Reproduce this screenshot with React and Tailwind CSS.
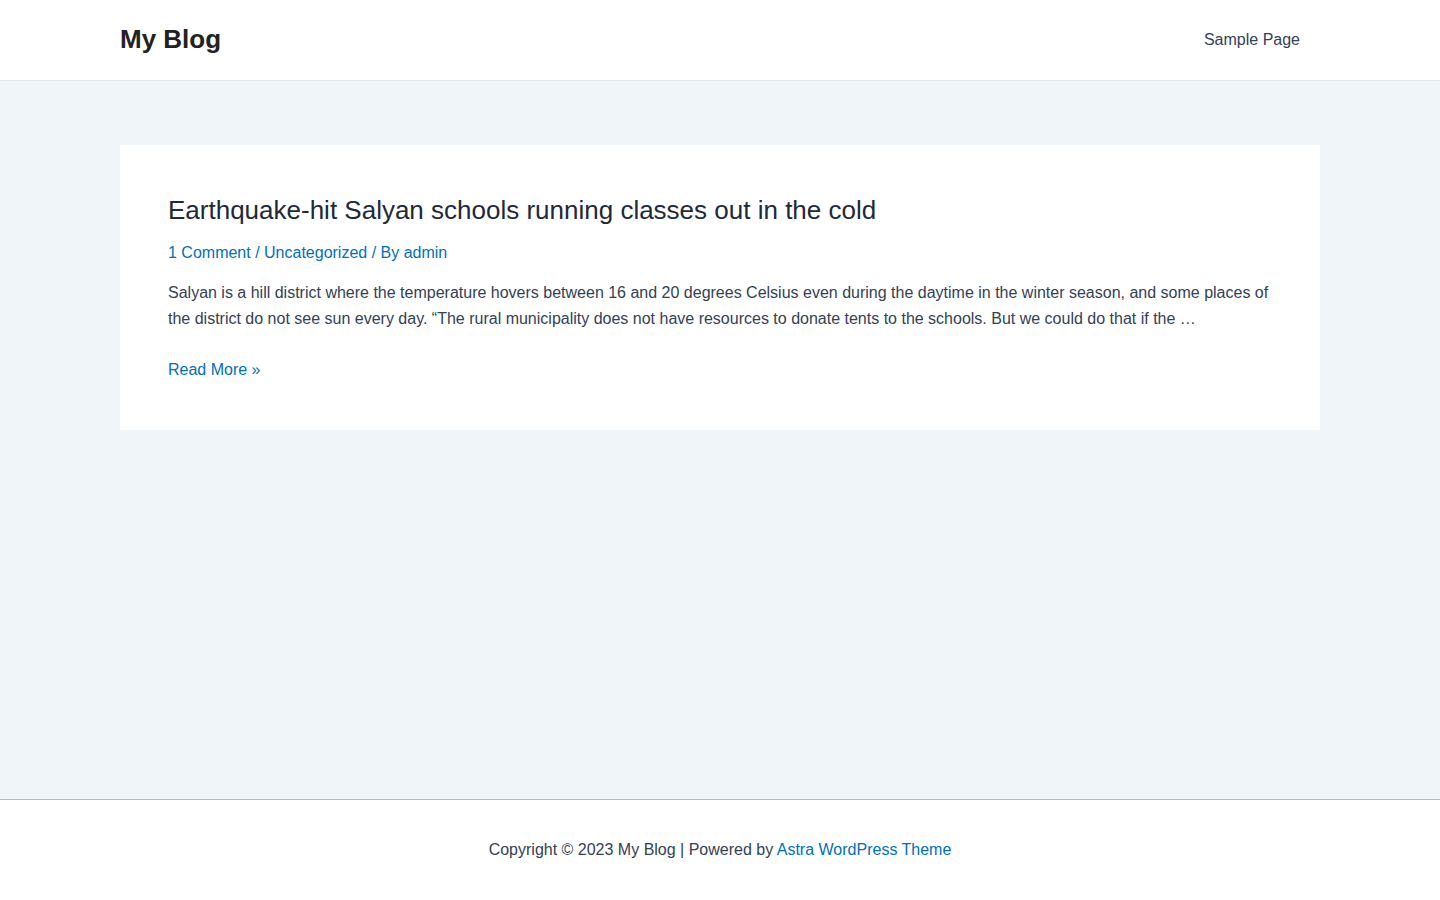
import React from 'react';

const font = { fontFamily: '"Liberation Sans", Arial, sans-serif' };

function Header() {
  return (
    <header className="h-[81px] bg-white border-b border-[#e5e7eb]">
      <div className="h-full max-w-[1240px] mx-auto px-5 flex items-center justify-between">
        <a href="#" className="block mb-[2px] text-[26px] font-bold leading-none text-[#222222]">My Blog</a>
        <nav>
          <a href="#" className="block px-5 text-[16px] text-[#334155]">Sample Page</a>
        </nav>
      </div>
    </header>
  );
}

function Post() {
  return (
    <article className="bg-white px-12 pt-[49px] pb-[47px]">
      <h2 className="text-[26px] leading-[32px] text-[#1e293b]">
        <a href="#">Earthquake-hit Salyan schools running classes out in the cold</a>
      </h2>
      <div className="mt-[14px] text-[16px] leading-[26px] text-[#0170b9]">
        <a href="#">1 Comment</a> / <a href="#">Uncategorized</a> / By <a href="#">admin</a>
      </div>
      <p className="mt-[14px] text-[16px] leading-[26px] text-[#334155]">
        Salyan is a hill district where the temperature hovers between 16 and 20 degrees Celsius even during the daytime in the winter season, and some places of the district do not see sun every day. “The rural municipality does not have resources to donate tents to the schools. But we could do that if the …
      </p>
      <div className="mt-[25px] text-[16px] leading-[26px]">
        <a href="#" className="text-[#0170b9]">Read More »</a>
      </div>
    </article>
  );
}

export default function App() {
  return (
    <div className="min-h-screen flex flex-col bg-[#f0f5fa]" style={font}>
      <Header />
      <main className="h-[718px] px-[120px] pt-16">
        <Post />
      </main>
      <footer className="h-[101px] bg-white border-t border-[#b4bbc2] flex items-center justify-center text-[16px] text-[#334155]">
        <p>
          Copyright © 2023 My Blog | Powered by <a href="#" className="text-[#0170b9]">Astra WordPress Theme</a>
        </p>
      </footer>
    </div>
  );
}
